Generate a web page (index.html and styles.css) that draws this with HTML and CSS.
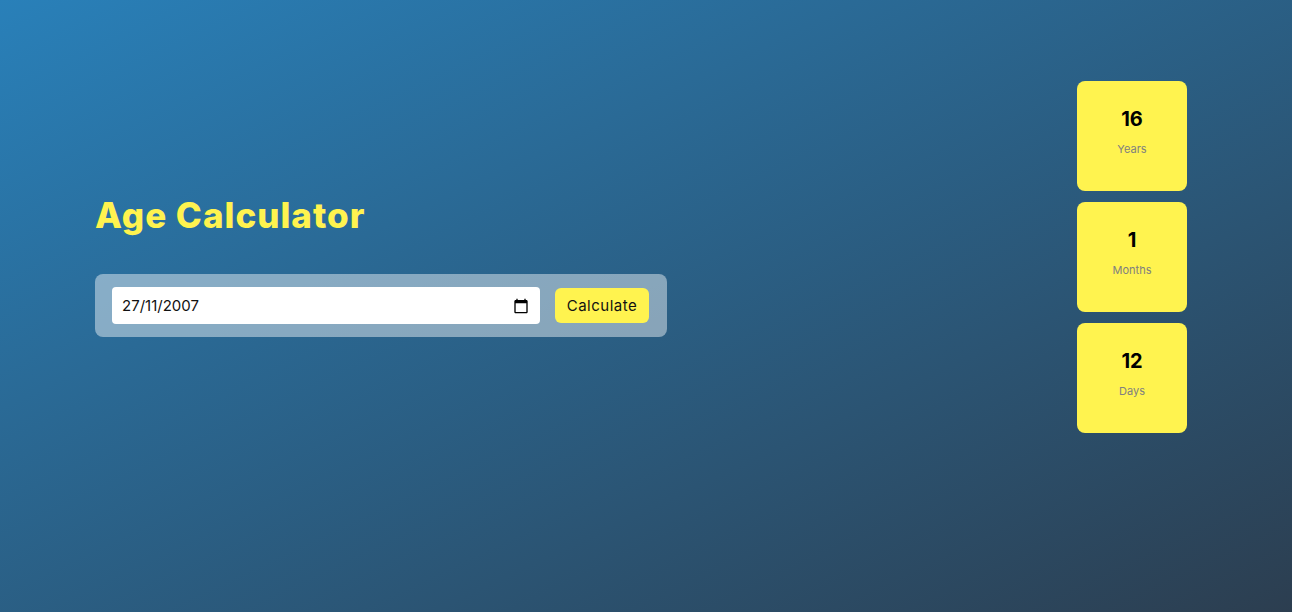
FILE: index.html
```html
<!DOCTYPE html>
<html lang="en">
<head>
<meta charset="utf-8">
<title>Age Calculator</title>
<link rel="stylesheet" href="styles.css">
</head>
<body>
<main class="app">
  <section class="calc">
    <h1 class="title">Age Calculator</h1>
    <div class="form-box">
      <div class="date-field">
        <span class="date-text">27/11/2007</span>
        <svg class="cal-icon" viewBox="0 0 24 24" width="16" height="16" aria-hidden="true"><path d="M20 3h-1V1h-2v2H7V1H5v2H4c-1.1 0-2 .9-2 2v16c0 1.1.9 2 2 2h16c1.1 0 2-.9 2-2V5c0-1.1-.9-2-2-2zm0 18H4V8h16v13z" fill="#000"/></svg>
      </div>
      <button class="calc-btn" type="button">Calculate</button>
    </div>
  </section>
  <section class="results">
    <div class="card"><div class="num">16</div><div class="unit">Years</div></div>
    <div class="card"><div class="num">1</div><div class="unit">Months</div></div>
    <div class="card"><div class="num">12</div><div class="unit">Days</div></div>
  </section>
</main>
</body>
</html>
```

FILE: styles.css
```css
* { box-sizing: border-box; }
html, body { margin: 0; padding: 0; }
body {
  height: 100vh;
  background: linear-gradient(to bottom right, #2980b9, #2c3e50);
  font-family: Inter, "Open Sans", sans-serif;
  overflow: hidden;
}
.app {
  display: flex;
  justify-content: space-between;
  align-items: flex-start;
  padding: 81px 105px 0 95px;
}
.calc { padding-top: 110px; }
.title {
  margin: 0 0 35px;
  font-size: 35px;
  line-height: 48px;
  font-weight: 800;
  letter-spacing: 1px;
  color: #fff34f;
}
.form-box {
  display: flex;
  align-items: center;
  gap: 15px;
  width: 572px;
  height: 63px;
  padding: 0 18px 0 17px;
  background: rgba(255, 255, 255, 0.44);
  border-radius: 8px;
}
.date-field {
  display: flex;
  align-items: center;
  justify-content: space-between;
  width: 428px;
  height: 37px;
  padding: 0 10px 0 10px;
  background: #fff;
  border-radius: 4px;
}
.date-text { font-size: 15px; color: #111; }
.cal-icon { display: block; margin-right: 1px; }
.calc-btn {
  width: 94px;
  height: 35px;
  border: 0;
  border-radius: 6px;
  background: #fff34f;
  color: #111;
  font-family: inherit;
  font-size: 15px;
  letter-spacing: 0.5px;
  padding: 0;
}
.results {
  display: flex;
  flex-direction: column;
  gap: 11px;
}
.card {
  width: 110px;
  height: 110px;
  background: #fff34f;
  border-radius: 8px;
  padding-top: 23px;
  text-align: center;
}
.num {
  font-size: 20px;
  line-height: 30px;
  font-weight: 700;
  color: #000;
}
.unit {
  margin-top: 7px;
  font-size: 11px;
  line-height: 16px;
  color: #808080;
}
```
